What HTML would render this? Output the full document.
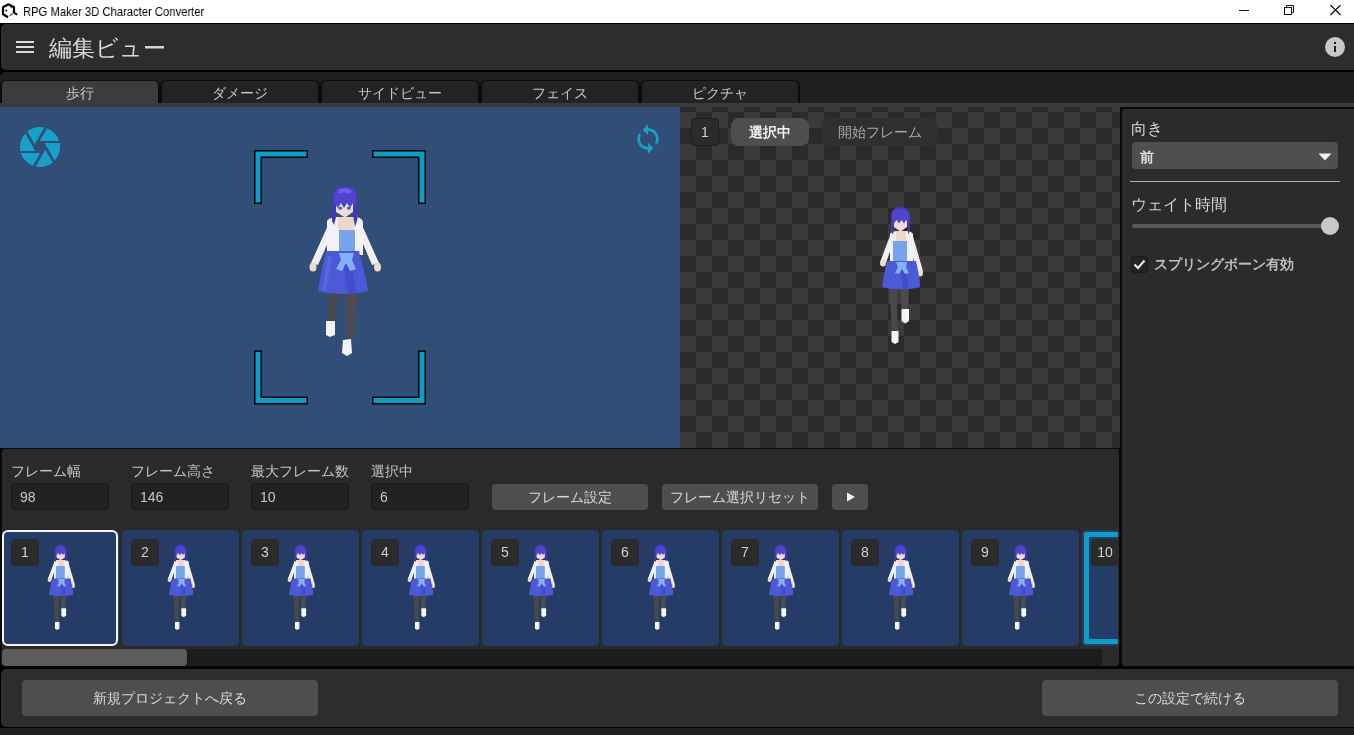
<!DOCTYPE html>
<html lang="ja">
<head>
<meta charset="utf-8">
<style>
*{box-sizing:border-box;margin:0;padding:0}
html,body{width:1354px;height:735px;overflow:hidden;background:#000;font-family:"Liberation Sans",sans-serif;}
.abs{will-change:transform}
.abs{position:absolute}
#titlebar{left:0;top:0;width:1354px;height:23px;background:#fff}
#titletext{left:23px;top:4.7px;font-size:12.5px;transform:scaleX(0.9);transform-origin:0 0;color:#000;white-space:nowrap}
#header{left:1px;top:24px;width:1353px;height:46px;background:#2d2d2d;border-radius:5px 0 0 5px}
#tabbar{left:0;top:72px;width:1354px;height:35px;background:#1f1f1f;border-radius:5px 0 0 0}
.tab{top:80px;width:160px;height:23px;border:2px solid #0c0c0c;border-top-width:1px;border-bottom:none;border-radius:6px 6px 0 0;background:#232323;color:#c8c8c8;font-size:14px;text-align:center;line-height:21px;padding-top:2px}
.tab.active{background:#3c3c3c}
#tabstrip{left:0;top:103px;width:1354px;height:4px;background:#3a3a3a}
#viewport{left:0;top:107px;width:680px;height:341px;background:#314e79;overflow:hidden}
#checker{left:680px;top:107px;width:440px;height:341px;overflow:hidden;
 background-color:#2a2a2a;
 background-image:linear-gradient(45deg,#3b3b3b 25%,transparent 25%,transparent 75%,#3b3b3b 75%),linear-gradient(45deg,#3b3b3b 25%,transparent 25%,transparent 75%,#3b3b3b 75%);
 background-size:32px 32px;background-position:0 -11px,16px 5px}
#rightpanel{left:1120px;top:107px;width:234px;height:560px;background:#2b2b2b;border:2px solid #0a0a0a;border-bottom-width:1px;border-right:none;border-radius:5px 0 0 5px}
#bottompanel{left:0;top:448px;width:1121px;height:219px;background:#2a2a2a;border:2px solid #0a0a0a;border-top-width:1px;border-left-width:2px;border-bottom-width:1px;border-radius:5px 5px 5px 5px}
#footer{left:1px;top:669px;width:1353px;height:58px;background:#2d2d2d;border-radius:5px 0 0 5px}
#bottomstrip{left:0;top:728px;width:1354px;height:7px;background:#1e1e1e}

#ham{left:16px;top:41px;width:18px;height:12px}
#ham i{position:absolute;left:0;width:18px;height:2px;background:#dcdcdc}
#htitle{left:48.5px;top:33px;font-size:23.2px;color:#d8d8d8;white-space:nowrap;line-height:30px}
#info{left:1325px;top:37px;width:20px;height:20px;border-radius:50%;background:#c8c8c8}
#info i{position:absolute;left:9px;width:2px;background:#1e1e1e}

.t14{font-size:14px;white-space:nowrap}
.t16{font-size:16px;white-space:nowrap}
.badge{width:28px;height:28px;border-radius:4px;background:#2b2b2b;color:#d0d0d0;font-size:14px;text-align:center;line-height:28px}
.pill{height:28px;border-radius:8px;font-size:14px;text-align:center;line-height:28px;white-space:nowrap}
.lbl{top:463px;font-size:14px;color:#c4c4c4;white-space:nowrap}
.inp{top:483px;width:98px;height:27px;background:#222;border:1px solid #1b1b1b;border-radius:4px;color:#c8c8c8;font-size:14px;line-height:26px;padding-left:8px}
.btn{background:#4e4e4e;border-radius:4px;color:#d8d8d8;font-size:14px;text-align:center;white-space:nowrap}
.thumb{top:0;width:117px;height:116px;background:#253d66;border-radius:4px;overflow:hidden}
.thumb .badge{position:absolute;left:9px;top:9px;height:27px;line-height:27px;border-radius:4px}
.thumb svg{position:absolute;left:45px;top:15px}
</style>
</head>
<body>
<div id="titlebar" class="abs"></div>
<div id="titletext" class="abs">RPG Maker 3D Character Converter</div>
<div id="header" class="abs"></div>

<svg class="abs" style="left:0;top:0" width="22" height="22" viewBox="0 0 22 22">
 <path d="M14 13 V7.3 L8.4 4.3 L3 7.3 V14.3 L8 17.2" fill="none" stroke="#000" stroke-width="2.2" stroke-linejoin="round"/>
 <path d="M9.5 15.6 L13 13.8" stroke="#555" stroke-width="1.2"/>
 <path d="M13.8 12.6 L17.2 14.6" stroke="#000" stroke-width="1.8"/>
 <path d="M9.5 6.6 L12 8" stroke="#666" stroke-width="1"/>
 <circle cx="6.3" cy="10.5" r="1.1" fill="#111"/>
</svg>
<svg class="abs" style="left:1239px;top:5px" width="104" height="12" viewBox="0 0 104 12">
 <rect x="0" y="5" width="10" height="1" fill="#111"/>
 <rect x="45.5" y="2.5" width="7" height="7" fill="none" stroke="#111" stroke-width="1"/>
 <path d="M47.5 2 V0.5 H54.5 V7.5 H53" fill="none" stroke="#111" stroke-width="1"/>
 <path d="M91.5 0 L101.5 10 M101.5 0 L91.5 10" stroke="#000" stroke-width="1.1"/>
</svg>
<div id="ham" class="abs"><i style="top:0"></i><i style="top:5px"></i><i style="top:10px"></i></div>
<div id="htitle" class="abs">編集ビュー</div>
<div id="info" class="abs"><i style="top:5px;height:2px"></i><i style="top:9px;height:6px"></i></div>
<div id="tabbar" class="abs"></div>
<div class="tab abs active" style="left:0">歩行</div>
<div class="tab abs" style="left:160px">ダメージ</div>
<div class="tab abs" style="left:320px">サイドビュー</div>
<div class="tab abs" style="left:480px">フェイス</div>
<div class="tab abs" style="left:640px">ピクチャ</div>
<div id="tabstrip" class="abs"></div>
<div id="viewport" class="abs"></div>
<div id="checker" class="abs"></div>
<div id="bottompanel" class="abs"></div>
<div id="rightpanel" class="abs"></div>
<div id="footer" class="abs"></div>
<div id="bottomstrip" class="abs"></div>
<svg width="0" height="0" style="position:absolute">
 <defs>
  <g id="chr">
   <path d="M21 108 L31 108 L28 128 L26 140 L20 140 Z" fill="#4a484c"/>
   <path d="M37 106 L50 106 L47 130 L46 156 L39 156 L38 130 Z" fill="#4d4b4f"/>
   <path d="M18 136 L27 136 L27 150 L22 152 L18 150 Z" fill="#f4f4f4"/>
   <path d="M35 155 L43 154 L44 168 L39 171 L34 168 Z" fill="#f4f4f4"/>
   <path d="M21 38 L28 40 L10 80 L3 78 Z" fill="#f0f0f4"/>
   <path d="M53 38 L47 40 L64 80 L71 78 Z" fill="#f0f0f4"/>
   <ellipse cx="5" cy="82" rx="3.5" ry="4.5" fill="#f0dccc"/>
   <ellipse cx="69.5" cy="82" rx="3.5" ry="4.5" fill="#f0dccc"/>
   <path d="M19 36 C21 33 25 32 30 32 L46 32 C50 32 54 33 55 37 L55 70 L19 70 Z" fill="#f2f2f6"/>
   <path d="M30 32 L46 32 L46 46 L30 46 Z" fill="#efd6cc"/>
   <path d="M31 45 L47 45 L47 69 L31 69 Z" fill="#78a4ec"/>
   <path d="M18 66 L51 66 C54 80 58 92 60 106 C48 110 22 110 10 106 C12 92 15 80 18 66 Z" fill="#4c5ad8"/>
   <path d="M34 70 L42 70 L48 108 L40 109 Z" fill="#3f4bc6" opacity="0.8"/>
   <path d="M20 72 L24 72 L18 106 L14 106 Z" fill="#5a6ae6" opacity="0.8"/>
   <path d="M31 68 L46 68 L44 75 L48 84 L42 86 L38 78 L34 86 L28 84 L33 75 Z" fill="#84b0f4"/>
   <path d="M24 14 C24 5 29 0.5 36.5 0.5 C44 0.5 49.5 5 49.5 14 L49.5 34 L47 42 L45 30 L44 26 L29 26 L28 32 L26 40 L24 36 Z" fill="#4538b6"/>
   <path d="M28 17 L45 17 L45 27 L37 32.5 L28 27 Z" fill="#f0dcd2"/>
   <path d="M25.5 12 C26 5 31 2 37 2 C43 2 48 5 48 12 L47.5 22 L45 18 L42 23 L39 18 L36 23 L33 18 L30 23 L27 19 Z" fill="#5044cc"/>
   <path d="M30 5 C34 3 40 3 44 6 L42 9 C38 7 34 7 31 9 Z" fill="#6a62e0"/>
   <path d="M30.5 22 h3.5 v2.5 h-3.5z M39 22 h3.5 v2.5 h-3.5z" fill="#2f62d8"/>
  </g>
 <g id="chr2">
   <path d="M9.5 80 L19 80 L18 105 L19 126 L13 126 L12 105 Z" fill="#4a484c"/>
   <path d="M21 80 L30 80 L29 104 L23 104 Z" fill="#4d4b4f"/>
   <path d="M12.5 124 L19.5 124 L19.5 135 L16 137 L12.5 135 Z" fill="#f4f4f4"/>
   <path d="M22.5 102 L30 102 L30 114 L26 116.5 L22.5 114 Z" fill="#f4f4f4"/>
   <path d="M12 26 L17 28 L7 56 L1.5 54 Z" fill="#f0f0f4"/>
   <path d="M33 26 L28 28 L38 66 L44 64 Z" fill="#f0f0f4"/>
   <ellipse cx="4" cy="56" rx="3" ry="3.5" fill="#f0dccc"/>
   <ellipse cx="41" cy="66" rx="3" ry="3.5" fill="#f0dccc"/>
   <path d="M11 27 C12 25 15 24 18 24 L27 24 C30 24 33 25 34 27 L34 55 L11 55 Z" fill="#f2f2f6"/>
   <path d="M17 24 L27 24 L27 34 L17 34 Z" fill="#efd6cc"/>
   <path d="M14 34 L28 34 L28 55 L14 55 Z" fill="#78a4ec"/>
   <path d="M8 54 L37 54 C39 63 41 72 41 80 C32 83 12 83 3 80 C4 72 6 63 8 54 Z" fill="#4c5ad8"/>
   <path d="M20 56 L26 56 L30 82 L24 82 Z" fill="#3f4bc6" opacity="0.8"/>
   <path d="M17 55 L28 55 L27 60 L30 66 L26 67 L23 62 L20 67 L16 66 L19 60 Z" fill="#84b0f4"/>
   <path d="M12 10 C12 3 16 0 21.5 0 C27 0 31 3 31 10 L31 22 L29.5 28 L28 18 L15 18 L14 28 L12 24 Z" fill="#4538b6"/>
   <path d="M15 12 L28 12 L28 20 L21.5 24.5 L15 20 Z" fill="#f0dcd2"/>
   <path d="M13 9 C13 3 17 1.5 21.5 1.5 C26 1.5 30 3 30 9 L29.5 16 L27 13 L25 16.5 L22.5 13 L20 16.5 L17.5 13 L15 16.5 L13.5 14 Z" fill="#5044cc"/>
  </g></defs>
</svg>

<div class="abs" style="left:0;top:107px;width:680px;height:341px;overflow:hidden">
 <svg class="abs" style="left:16px;top:16px" width="48" height="48" viewBox="0 0 24 24"><path fill="#18a0c8" d="M9.4 10.5l4.77-8.26C13.47 2.09 12.75 2 12 2c-2.4 0-4.6.85-6.32 2.25l3.66 6.35.06-.1zM21.54 9c-.92-2.92-3.15-5.26-6-6.34L11.88 9h9.66zm.26 1h-7.49l.29.5 4.76 8.25C21 16.97 22 14.610 22 12c0-.69-.07-1.35-.2-2zM8.54 12l-3.9-6.75C3.01 7.03 2 9.39 2 12c0 .69.07 1.35.2 2h7.49l-1.15-2zm-6.080 3c.92 2.92 3.15 5.26 6 6.34L12.12 15H2.46zm11.27 0l-3.9 6.76c.7.15 1.42.24 2.17.24 2.4 0 4.6-.85 6.32-2.25l-3.66-6.35-.93 1.6z"/></svg>
 <svg class="abs" style="left:632px;top:16px" width="32" height="32" viewBox="0 0 24 24"><path fill="#18a0c8" d="M12 4V1L8 5l4 4V6c3.31 0 6 2.69 6 6 0 1.01-.25 1.97-.7 2.8l1.46 1.46C19.54 15.03 20 13.570 20 12c0-4.42-3.58-8-8-8zm0 14c-3.31 0-6-2.69-6-6 0-1.01.25-1.97.7-2.8L5.24 7.74C4.46 8.97 4 10.43 4 12c0 4.42 3.58 8 8 8v3l4-4-4-4v3z"/></svg>
 <svg class="abs" style="left:250px;top:39px" width="180" height="262" viewBox="0 0 180 262">
  <g fill="none" stroke-linecap="butt" stroke-linejoin="miter">
   <path d="M8 58 V8 H58 M122 8 H172 V58 M8 204.5 V254.5 H58 M122 254.5 H172 V204.5" stroke="#050505" stroke-width="8"/>
   <path d="M8 56.5 V8 H56.5 M123.5 8 H172 V56.5 M8 206 V254.5 H56.5 M123.5 254.5 H172 V206" stroke="#0c9ec6" stroke-width="5"/>
  </g>
 </svg>
 <svg class="abs" style="left:308px;top:78px" width="74" height="172" viewBox="0 0 74 172"><use href="#chr"/></svg>
</div>
<div class="abs" style="left:680px;top:107px;width:440px;height:341px;overflow:hidden">
 <div class="badge abs" style="left:11px;top:11px;border:1px solid #1e1e1e;line-height:26px">1</div>
 <div class="pill abs" style="left:51px;top:11px;width:78px;background:#4e4e4e;color:#f0f0f0;font-weight:bold">選択中</div>
 <div class="pill abs" style="left:141px;top:11px;width:117px;background:rgba(48,48,48,0.92);color:#a8a8a8">開始フレーム</div>
 <svg class="abs" style="left:199px;top:100px" width="44" height="137" viewBox="0 0 44 137"><use href="#chr2"/></svg>
</div>
<div class="abs t16" style="left:1131px;top:119px;color:#d4d4d4">向き</div>
<div class="abs" style="left:1132px;top:142px;width:206px;height:27px;background:#4f4f4f;border-radius:4px"></div>
<div class="abs t14" style="left:1140px;top:149px;color:#e0e0e0;font-weight:bold;font-size:13.5px">前</div>
<svg class="abs" style="left:1318px;top:153px" width="14" height="8" viewBox="0 0 14 8"><path d="M0.5 0.5 H13.5 L7 7.5Z" fill="#eeeeee"/></svg>
<div class="abs" style="left:1130px;top:181px;width:210px;height:1px;background:#b0b0b0"></div>
<div class="abs t16" style="left:1131px;top:195px;color:#d4d4d4">ウェイト時間</div>
<div class="abs" style="left:1132px;top:224px;width:198px;height:4px;background:#5a5a5a;border-radius:2px"></div>
<div class="abs" style="left:1321px;top:217px;width:18px;height:18px;border-radius:50%;background:#c8c8c8"></div>
<div class="abs" style="left:1131px;top:256px;width:17px;height:17px;background:#232323;border:1px solid #1a1a1a;border-radius:3px"></div>
<svg class="abs" style="left:1131px;top:256px" width="17" height="17" viewBox="0 0 17 17"><path d="M3.5 8.5 L7 12 L13.5 4.5" fill="none" stroke="#f4f4f4" stroke-width="2"/></svg>
<div class="abs t14" style="left:1154px;top:256px;color:#bcbcbc;font-weight:bold;font-size:13.8px">スプリングボーン有効</div>

<div class="lbl abs" style="left:11px">フレーム幅</div>
<div class="lbl abs" style="left:131px">フレーム高さ</div>
<div class="lbl abs" style="left:251px">最大フレーム数</div>
<div class="lbl abs" style="left:371px">選択中</div>
<div class="inp abs" style="left:11px">98</div>
<div class="inp abs" style="left:131px">146</div>
<div class="inp abs" style="left:251px">10</div>
<div class="inp abs" style="left:371px">6</div>
<div class="btn abs" style="left:492px;top:484px;width:156px;height:26px;line-height:26px">フレーム設定</div>
<div class="btn abs" style="left:662px;top:484px;width:156px;height:26px;line-height:26px">フレーム選択リセット</div>
<div class="btn abs" style="left:832px;top:484px;width:36px;height:26px"></div>
<svg class="abs" style="left:846px;top:492px" width="10" height="10" viewBox="0 0 10 10"><path d="M1 0.5 L9 5 L1 9.5Z" fill="#f0f0f0"/></svg>
<div class="abs" style="left:1px;top:530px;width:1117px;height:117px;overflow:hidden" id="thumbs"><div class="thumb abs" style="left:1px"><div style="position:absolute;left:0;top:0;width:116px;height:116px;border:2px solid #f4f4f4;border-radius:6px"></div><div class="badge">1</div><svg width="28" height="85" viewBox="0 0 44 137" preserveAspectRatio="none"><use href="#chr2"/></svg></div><div class="thumb abs" style="left:121px"><div class="badge">2</div><svg width="28" height="85" viewBox="0 0 44 137" preserveAspectRatio="none"><use href="#chr2"/></svg></div><div class="thumb abs" style="left:241px"><div class="badge">3</div><svg width="28" height="85" viewBox="0 0 44 137" preserveAspectRatio="none"><use href="#chr2"/></svg></div><div class="thumb abs" style="left:361px"><div class="badge">4</div><svg width="28" height="85" viewBox="0 0 44 137" preserveAspectRatio="none"><use href="#chr2"/></svg></div><div class="thumb abs" style="left:481px"><div class="badge">5</div><svg width="28" height="85" viewBox="0 0 44 137" preserveAspectRatio="none"><use href="#chr2"/></svg></div><div class="thumb abs" style="left:601px"><div class="badge">6</div><svg width="28" height="85" viewBox="0 0 44 137" preserveAspectRatio="none"><use href="#chr2"/></svg></div><div class="thumb abs" style="left:721px"><div class="badge">7</div><svg width="28" height="85" viewBox="0 0 44 137" preserveAspectRatio="none"><use href="#chr2"/></svg></div><div class="thumb abs" style="left:841px"><div class="badge">8</div><svg width="28" height="85" viewBox="0 0 44 137" preserveAspectRatio="none"><use href="#chr2"/></svg></div><div class="thumb abs" style="left:961px"><div class="badge">9</div><svg width="28" height="85" viewBox="0 0 44 137" preserveAspectRatio="none"><use href="#chr2"/></svg></div><div class="thumb abs" style="left:1081px"><div style="position:absolute;left:2px;top:2px;width:113px;height:112px;border:5px solid #0c9ec6;border-radius:2px"></div><div class="badge">10</div><svg width="28" height="85" viewBox="0 0 44 137" preserveAspectRatio="none"><use href="#chr2"/></svg></div></div>
<div class="abs" style="left:1px;top:649px;width:1101px;height:17px;background:#1c1c1c;border-radius:3px"></div>
<div class="abs" style="left:2px;top:649px;width:185px;height:17px;background:#5c5c5c;border-radius:4px"></div>
<div class="btn abs" style="left:22px;top:680px;width:296px;height:36px;line-height:36px">新規プロジェクトへ戻る</div>
<div class="btn abs" style="left:1042px;top:680px;width:296px;height:36px;line-height:36px">この設定で続ける</div>

</body>
</html>
